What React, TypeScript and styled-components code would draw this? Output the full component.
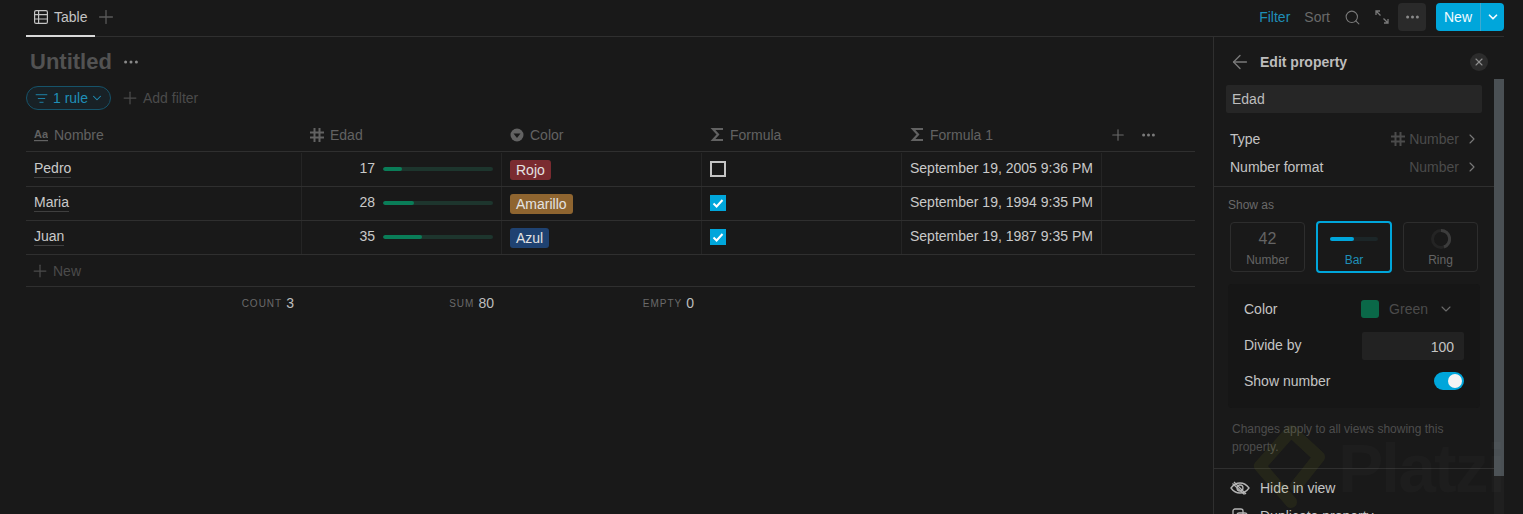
import React from "react"
import styled, { createGlobalStyle } from "styled-components"
import { ArrowLeft, ChevronDown, ChevronRight, ListFilter, Plus, Search, X } from "lucide-react"

const GlobalStyle = createGlobalStyle`
  html, body {
    margin: 0;
    padding: 0;
    background: #191919;
  }
  * {
    box-sizing: border-box;
  }
`

const TEXT = "#c9c9c9"
const MUTED = "#5a5a5a"
const FAINT = "#4b4b4b"
const LINE = "#2f2f2f"
const CYAN = "#00a6db"

const Page = styled.div`
  position: relative;
  width: 1523px;
  height: 514px;
  overflow: hidden;
  background: #191919;
  color: ${TEXT};
  font: 14px/18px "Liberation Sans", Arial, sans-serif;
`

const TopBar = styled.div`
  display: flex;
  justify-content: space-between;
  height: 37px;
  margin: 0 19px 0 26px;
  border-bottom: 1px solid ${LINE};
`

const Tabs = styled.div`
  display: flex;
  align-items: flex-start;
`

const ActiveTab = styled.div`
  display: flex;
  align-items: center;
  gap: 6px;
  height: 37px;
  width: 69px;
  padding: 0 0 1px 8px;
  border-bottom: 2px solid #d8d8d8;
  color: #c4c4c4;
`

const AddTab = styled.div`
  display: flex;
  height: 34px;
  align-items: center;
  color: ${MUTED};
`

const Actions = styled.div`
  display: flex;
  align-items: center;
  height: 34px;
`

const ActionText = styled.span<{ $on?: boolean }>`
  color: ${(p) => (p.$on ? "#1f8fb8" : "#6a6a6a")};
  & + & {
    margin-left: 14px;
  }
`

const IconAction = styled.div<{ $on?: boolean }>`
  display: flex;
  align-items: center;
  justify-content: center;
  width: 28px;
  height: 28px;
  margin-right: 2px;
  border-radius: 4px;
  color: #7a7a7a;
  background: ${(p) => (p.$on ? "#2a2a2a" : "transparent")};
  ${ActionText} + & {
    margin-left: 8px;
  }
`

const NewButton = styled.div`
  display: flex;
  height: 28px;
  margin-left: 8px;
  border-radius: 4px;
  overflow: hidden;
  background: ${CYAN};
  color: #f2fbff;
`

const NewLabel = styled.span`
  display: flex;
  align-items: center;
  padding: 0 8px;
  width: 45px;
  border-right: 1px solid #3fa9cf;
`

const NewCaret = styled.span`
  display: flex;
  align-items: center;
  justify-content: center;
  width: 23px;
`

const Workspace = styled.div`
  display: flex;
  height: 477px;
  margin-right: 19px;
`

const Main = styled.div`
  width: 1213px;
  padding-left: 26px;
  flex: none;
`

const TitleRow = styled.div`
  display: flex;
  align-items: center;
  gap: 12px;
  height: 49px;
  padding-left: 4px;
`

const Title = styled.h1`
  margin: 0;
  font-size: 22px;
  line-height: 30px;
  font-weight: 700;
  color: #525252;
`

const FilterRow = styled.div`
  display: flex;
  align-items: center;
  height: 24px;
`

const RuleChip = styled.div`
  display: flex;
  align-items: center;
  gap: 5px;
  width: 85px;
  height: 24px;
  padding-left: 8px;
  border: 1px solid #16536a;
  border-radius: 12px;
  background: #182126;
  color: #1f8fb8;
`

const RuleCaret = styled(ChevronDown)`
  margin-left: -3px;
`

const AddFilter = styled.div`
  display: flex;
  align-items: center;
  gap: 3px;
  margin-left: 9px;
  color: ${FAINT};
`

const Table = styled.div`
  width: 1169px;
  margin-top: 8px;
`

const GRID = "276px 200px 200px 200px 200px 93px"

const HeaderRow = styled.div`
  display: grid;
  grid-template-columns: ${GRID};
  height: 34px;
  margin-bottom: 1px;
  border-bottom: 1px solid ${LINE};
`

const HeaderCell = styled.div`
  display: flex;
  align-items: center;
  gap: 6px;
  padding-left: 8px;
  color: #626262;
`

const HeaderActions = styled.div`
  display: flex;
  align-items: center;
  gap: 15px;
  padding-left: 7px;
  color: #6a6a6a;
`

const Row = styled.div`
  display: grid;
  grid-template-columns: ${GRID};
  height: 34px;
  border-bottom: 1px solid ${LINE};
`

const Cell = styled.div`
  display: flex;
  align-items: flex-start;
  padding: 6px 8px 0;
  border-right: 1px solid #252525;
  &:last-child {
    border-right: none;
  }
`

const Name = styled.span`
  border-bottom: 1px solid #3f3f3f;
  line-height: 18px;
`

const NumberCell = styled(Cell)`
  justify-content: flex-end;
  gap: 8px;
`

const Track = styled.div`
  width: 110px;
  height: 4px;
  margin-top: 8px;
  border-radius: 2px;
  background: #1d352d;
  overflow: hidden;
`

const Fill = styled.div`
  height: 100%;
  border-radius: 2px;
  background: #0a7d58;
`

const Tag = styled.span<{ $bg: string }>`
  margin-top: 1px;
  padding: 1px 6px;
  border-radius: 3px;
  background: ${(p) => p.$bg};
  color: #e3e3e3;
  line-height: 18px;
`

const Box = styled.div<{ $on?: boolean }>`
  display: flex;
  align-items: center;
  justify-content: center;
  width: 16px;
  height: 16px;
  margin-top: 2px;
  border: ${(p) => (p.$on ? "none" : "2px solid #c4c4c4")};
  background: ${(p) => (p.$on ? CYAN : "transparent")};
`

const NewRow = styled.div`
  display: flex;
  align-items: center;
  gap: 3px;
  height: 32px;
  padding-left: 4px;
  border-bottom: 1px solid ${LINE};
  color: ${FAINT};
`

const FooterRow = styled.div`
  display: grid;
  grid-template-columns: ${GRID};
  height: 34px;
`

const Calc = styled.div`
  display: flex;
  align-items: center;
  justify-content: flex-end;
  gap: 4px;
  padding: 0 8px 2px 0;
  color: #bdbdbd;
`

const CalcLabel = styled.span`
  font-size: 10px;
  letter-spacing: 1px;
  color: #6a6a6a;
  padding-top: 2px;
`

const Panel = styled.aside`
  width: 291px;
  flex: none;
  border-left: 1px solid ${LINE};
`

const PanelHeader = styled.div`
  display: flex;
  align-items: center;
  height: 42px;
  padding: 7px 16px 0 15px;
`

const PanelTitle = styled.strong`
  flex: 1;
  margin-left: 9px;
  font-weight: 700;
  color: #bdbdbd;
`

const CloseButton = styled.div`
  display: flex;
  align-items: center;
  justify-content: center;
  width: 18px;
  height: 18px;
  border-radius: 50%;
  background: #2c2c2c;
  color: #8f8f8f;
`

const PanelBody = styled.div`
  display: flex;
`

const PanelContent = styled.div`
  width: 280px;
  flex: none;
`

const ScrollTrack = styled.div`
  width: 10px;
  height: 435px;
  background: #1f1f1f;
`

const ScrollThumb = styled.div`
  height: 397px;
  background: #4a5054;
`

const NameInput = styled.div`
  height: 28px;
  margin: 6px 12px 0;
  padding: 5px 6px;
  border-radius: 2px;
  background: #262626;
  color: #bdbdbd;
`

const PropList = styled.div`
  padding: 12px 16px 5px;
  border-bottom: 1px solid ${LINE};
`

const PropRow = styled.div`
  display: flex;
  align-items: center;
  height: 28px;
  color: #c4c4c4;
`

const PropValue = styled.span`
  display: flex;
  align-items: center;
  gap: 4px;
  margin-left: auto;
  margin-right: -2px;
  color: ${FAINT};
`

const PropChevron = styled(ChevronRight)`
  margin-left: 1px;
`

const ShowLabel = styled.div`
  margin: 9px 0 0 14px;
  font-size: 12px;
  color: #6a6a6a;
`

const Cards = styled.div`
  display: flex;
  align-items: center;
  gap: 11px;
  margin: 7px 0 0 16px;
`

const Card = styled.div<{ $on?: boolean }>`
  display: flex;
  flex-direction: column;
  align-items: center;
  width: ${(p) => (p.$on ? 76 : 75)}px;
  height: ${(p) => (p.$on ? 52 : 50)}px;
  border: ${(p) => (p.$on ? `2px solid ${CYAN}` : "1px solid #2d2d2d")};
  border-radius: 4px;
  font-size: 12px;
  line-height: 16px;
  color: ${(p) => (p.$on ? "#1f8fb8" : "#646464")};
`

const CardArt = styled.div`
  display: flex;
  align-items: center;
  justify-content: center;
  height: 24px;
  margin: 4px 0 1px;
  font-size: 16px;
`

const MiniTrack = styled.div`
  width: 48px;
  height: 4px;
  border-radius: 2px;
  background: #1c2628;
`

const MiniFill = styled.div`
  width: 24px;
  height: 4px;
  border-radius: 2px;
  background: ${CYAN};
`

const Settings = styled.div`
  width: 252px;
  height: 124px;
  margin: 11px 0 0 14px;
  padding: 11px 16px 0;
  border-radius: 4px;
  background: #161616;
`

const SettingRow = styled.div<{ $h: number }>`
  display: flex;
  align-items: center;
  justify-content: space-between;
  height: ${(p) => p.$h}px;
  color: #c4c4c4;
`

const ColorPick = styled.div`
  display: flex;
  align-items: center;
  color: ${FAINT};
`

const ColorCaret = styled(ChevronDown)`
  margin: 0 10px;
`

const Swatch = styled.span`
  width: 18px;
  height: 18px;
  margin-right: 10px;
  border-radius: 3px;
  background: #0a6848;
`

const DivideInput = styled.div`
  width: 102px;
  height: 28px;
  margin-top: 2px;
  padding: 6px 10px;
  border-radius: 2px;
  text-align: right;
  background: #222222;
`

const Toggle = styled.div`
  display: flex;
  justify-content: flex-end;
  align-items: center;
  width: 30px;
  height: 18px;
  padding: 2px;
  border-radius: 9px;
  background: ${CYAN};
`

const Knob = styled.span`
  width: 14px;
  height: 14px;
  border-radius: 50%;
  background: #f4f4f4;
`

const Note = styled.p`
  margin: 12px 0 0;
  padding: 0 16px 12px 18px;
  font-size: 12px;
  line-height: 18px;
  color: #4d4d4d;
  border-bottom: 1px solid ${LINE};
`

const MenuList = styled.div`
  padding: 5px 16px;
`

const MenuItem = styled.div`
  display: flex;
  align-items: center;
  gap: 10px;
  height: 28px;
  color: #c4c4c4;
`

const MenuIcon = styled.span`
  display: flex;
  justify-content: center;
  width: 20px;
`

const Watermark = styled.div`
  position: absolute;
  left: 1253px;
  top: 424px;
  display: flex;
  align-items: flex-start;
  gap: 13px;
  pointer-events: none;
`

const WatermarkWord = styled.span`
  margin-top: 2px;
  font-size: 68px;
  line-height: 84px;
  font-weight: 700;
  letter-spacing: -2px;
  color: rgba(255, 255, 255, 0.018);
`

const TableIcon = () => (
  <svg width="14" height="14" viewBox="0 0 14 14" fill="none" stroke="#c4c4c4" strokeWidth="1.2">
    <rect x="0.6" y="0.6" width="12.8" height="12.8" rx="1.5" />
    <path d="M0.6 4.6h12.8M0.6 9h12.8M4.6 0.6v12.8" />
  </svg>
)

const HashIcon = ({ color = "#626262" }: { color?: string }) => (
  <svg width="14" height="14" viewBox="0 0 14 14" fill="none" stroke={color} strokeWidth="2">
    <path d="M0 4.5h14M0 9.5h14M4.5 0v14M9.5 0v14" />
  </svg>
)

const SigmaIcon = () => (
  <svg width="14" height="15" viewBox="0 0 14 15" fill="none" stroke="#626262" strokeWidth="2.2">
    <path d="M13 2H3l5 5.500L3 13h10" />
  </svg>
)

const SelectIcon = () => (
  <svg width="14" height="14" viewBox="0 0 14 14">
    <circle cx="7" cy="7" r="6.5" fill="#626262" />
    <path d="M3.5 5.5h7L7 10z" fill="#191919" />
  </svg>
)

const Dots = ({ color = "#8a8a8a", width = 14 }: { color?: string; width?: number }) => (
  <svg width={width} height="4" viewBox={`0 0 ${width} 4`} fill={color}>
    <circle cx="1.600" cy="2" r="1.500" />
    <circle cx={width / 2} cy="2" r="1.500" />
    <circle cx={width - 1.6} cy="2" r="1.500" />
  </svg>
)

const ExpandIcon = () => (
  <svg width="14" height="14" viewBox="0 0 14 14" fill="none" stroke="#7a7a7a" strokeWidth="1.3">
    <path d="M1 5V1h4M1 1l4.5 4.5M13 9v4H9M13 13L8.5 8.5" />
  </svg>
)

const CheckMark = () => (
  <svg width="12" height="12" viewBox="0 0 12 12" fill="none" stroke="#ffffff" strokeWidth="2">
    <path d="M1.5 6.5L4.6 9.5L10.5 3" />
  </svg>
)

const AaIcon = () => (
  <svg width="14" height="14" viewBox="0 0 14 14" fill="#626262">
    <text x="0" y="10" fontSize="11" fontWeight="700" fontFamily="Liberation Sans, sans-serif">Aa</text>
    <rect x="0" y="12" width="14" height="1.2" />
  </svg>
)

const EyeOffIcon = () => (
  <svg width="20" height="14" viewBox="0 0 20 14" fill="none" stroke="#b5b5b5" strokeWidth="1.3">
    <path d="M1 7c2.500-3.500 5.500-5 9-5s6.500 1.500 9 5c-2.500 3.500-5.500 5-9 5S3.500 10.500 1 7z" />
    <circle cx="10" cy="7" r="3" />
    <path d="M4 1l12 12M2.500 2.500l12 11" />
  </svg>
)

const CopyIcon = () => (
  <svg width="16" height="16" viewBox="0 0 16 16" fill="none" stroke="#b5b5b5" strokeWidth="1.3">
    <rect x="1" y="1" width="10" height="10" rx="2" />
    <rect x="5" y="5" width="10" height="10" rx="2" />
  </svg>
)

const RingIcon = () => (
  <svg width="20" height="20" viewBox="0 0 20 20" fill="none" strokeWidth="3">
    <circle cx="10" cy="10" r="8.500" stroke="#242424" />
    <path d="M10 1.500a8.500 8.500 0 0 1 3 16.500" stroke="#3c3c3c" />
  </svg>
)

const PlatziLogo = () => (
  <svg width="72" height="84" viewBox="0 0 72 84" fill="none" stroke="rgba(150,170,30,0.09)" strokeWidth="12" strokeLinejoin="round" strokeLinecap="round">
    <path d="M43 62L66 33L38 7L7 42L38 78" />
  </svg>
)

const rows = [
  { name: "Pedro", age: 17, tag: "Rojo", bg: "#7a2b30", on: false, date: "September 19, 2005 9:36 PM" },
  { name: "Maria", age: 28, tag: "Amarillo", bg: "#8f6530", on: true, date: "September 19, 1994 9:35 PM" },
  { name: "Juan", age: 35, tag: "Azul", bg: "#1f4271", on: true, date: "September 19, 1987 9:35 PM" },
]

export default function App() {
  return (
    <Page>
      <GlobalStyle />
      <TopBar>
        <Tabs>
          <ActiveTab>
            <TableIcon />
            Table
          </ActiveTab>
          <AddTab>
            <Plus size={22} strokeWidth={1.4} />
          </AddTab>
        </Tabs>
        <Actions>
          <ActionText $on>Filter</ActionText>
          <ActionText>Sort</ActionText>
          <IconAction>
            <Search size={17} strokeWidth={1.5} />
          </IconAction>
          <IconAction>
            <ExpandIcon />
          </IconAction>
          <IconAction $on>
            <Dots width={13} />
          </IconAction>
          <NewButton>
            <NewLabel>New</NewLabel>
            <NewCaret>
              <ChevronDown size={14} strokeWidth={3} />
            </NewCaret>
          </NewButton>
        </Actions>
      </TopBar>
      <Workspace>
        <Main>
          <TitleRow>
            <Title>Untitled</Title>
            <Dots />
          </TitleRow>
          <FilterRow>
            <RuleChip>
              <ListFilter size={13} strokeWidth={1.6} />
              1 rule
              <RuleCaret size={14} strokeWidth={1.8} />
            </RuleChip>
            <AddFilter>
              <Plus size={20} strokeWidth={1.5} />
              Add filter
            </AddFilter>
          </FilterRow>
          <Table>
            <HeaderRow>
              <HeaderCell>
                <AaIcon />
                Nombre
              </HeaderCell>
              <HeaderCell>
                <HashIcon />
                Edad
              </HeaderCell>
              <HeaderCell>
                <SelectIcon />
                Color
              </HeaderCell>
              <HeaderCell>
                <SigmaIcon />
                Formula
              </HeaderCell>
              <HeaderCell>
                <SigmaIcon />
                Formula 1
              </HeaderCell>
              <HeaderActions>
                <Plus size={18} strokeWidth={1.5} />
                <Dots color="#7a7a7a" width={13} />
              </HeaderActions>
            </HeaderRow>
            {rows.map((r) => (
              <Row key={r.name}>
                <Cell>
                  <Name>{r.name}</Name>
                </Cell>
                <NumberCell>
                  {r.age}
                  <Track>
                    <Fill style={{ width: `${r.age}%` }} />
                  </Track>
                </NumberCell>
                <Cell>
                  <Tag $bg={r.bg}>{r.tag}</Tag>
                </Cell>
                <Cell>
                  <Box $on={r.on}>{r.on && <CheckMark />}</Box>
                </Cell>
                <Cell>{r.date}</Cell>
                <Cell />
              </Row>
            ))}
            <NewRow>
              <Plus size={20} strokeWidth={1.5} />
              New
            </NewRow>
            <FooterRow>
              <Calc>
                <CalcLabel>COUNT</CalcLabel>3
              </Calc>
              <Calc>
                <CalcLabel>SUM</CalcLabel>80
              </Calc>
              <Calc>
                <CalcLabel>EMPTY</CalcLabel>0
              </Calc>
            </FooterRow>
          </Table>
        </Main>
        <Panel>
          <PanelHeader>
            <ArrowLeft size={22} strokeWidth={1.5} color="#7a7a7a" />
            <PanelTitle>Edit property</PanelTitle>
            <CloseButton>
              <X size={12} strokeWidth={2.2} />
            </CloseButton>
          </PanelHeader>
          <PanelBody>
            <PanelContent>
              <NameInput>Edad</NameInput>
              <PropList>
                <PropRow>
                  Type
                  <PropValue>
                    <HashIcon color={FAINT} />
                    Number
                    <PropChevron size={16} strokeWidth={1.6} color="#7a7a7a" />
                  </PropValue>
                </PropRow>
                <PropRow>
                  Number format
                  <PropValue>
                    Number
                    <PropChevron size={16} strokeWidth={1.6} color="#7a7a7a" />
                  </PropValue>
                </PropRow>
              </PropList>
              <ShowLabel>Show as</ShowLabel>
              <Cards>
                <Card>
                  <CardArt>42</CardArt>
                  Number
                </Card>
                <Card $on>
                  <CardArt>
                    <MiniTrack>
                      <MiniFill />
                    </MiniTrack>
                  </CardArt>
                  Bar
                </Card>
                <Card>
                  <CardArt>
                    <RingIcon />
                  </CardArt>
                  Ring
                </Card>
              </Cards>
              <Settings>
                <SettingRow $h={28}>
                  Color
                  <ColorPick>
                    <Swatch />
                    Green
                    <ColorCaret size={16} strokeWidth={1.6} color="#6a6a6a" />
                  </ColorPick>
                </SettingRow>
                <SettingRow $h={44}>
                  Divide by
                  <DivideInput>100</DivideInput>
                </SettingRow>
                <SettingRow $h={28}>
                  Show number
                  <Toggle>
                    <Knob />
                  </Toggle>
                </SettingRow>
              </Settings>
              <Note>Changes apply to all views showing this property.</Note>
              <MenuList>
                <MenuItem>
                  <MenuIcon>
                    <EyeOffIcon />
                  </MenuIcon>
                  Hide in view
                </MenuItem>
                <MenuItem>
                  <MenuIcon>
                    <CopyIcon />
                  </MenuIcon>
                  Duplicate property
                </MenuItem>
              </MenuList>
            </PanelContent>
            <ScrollTrack>
              <ScrollThumb />
            </ScrollTrack>
          </PanelBody>
        </Panel>
      </Workspace>
      <Watermark>
        <PlatziLogo />
        <WatermarkWord>Platzi</WatermarkWord>
      </Watermark>
    </Page>
  )
}
